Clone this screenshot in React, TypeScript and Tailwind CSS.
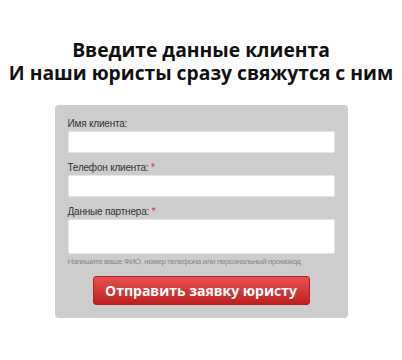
export default function App() {
  return (
    <main className="h-[360px] w-[402px] bg-white pt-[38px]">
      <h1 className="text-center font-['Open_Sans',sans-serif] text-[19.3px] font-bold leading-[23px] text-[#111]">
        Введите данные клиента
        <br />
        И наши юристы сразу свяжутся с ним
      </h1>

      <form className="mx-auto mt-[21px] w-[293px] rounded-[4px] bg-[#cdcdcd] px-[13px] pb-[13px] pt-[12px] font-['Liberation_Sans',Arial,sans-serif]">
        <label className="block text-[10px] leading-[14px] tracking-[-0.2px] text-[#333]">Имя клиента:</label>
        <input
          type="text"
          className="block h-[22px] w-full rounded-[2px] border border-[#e6e6e6] bg-white"
        />

        <label className="mt-[8px] block text-[10px] leading-[14px] tracking-[-0.2px] text-[#333]">
          Телефон клиента: <span className="text-[#e02b2b]">*</span>
        </label>
        <input
          type="text"
          className="block h-[22px] w-full rounded-[2px] border border-[#e6e6e6] bg-white"
        />

        <label className="mt-[8px] block text-[10px] leading-[14px] tracking-[-0.2px] text-[#333]">
          Данные партнера: <span className="text-[#e02b2b]">*</span>
        </label>
        <textarea className="block h-[35px] w-full resize-none rounded-[2px] border border-[#e6e6e6] bg-white" />
        <p className="mt-[2px] whitespace-nowrap text-[8px] leading-[11px] tracking-[-0.4px] text-[#888]">
          Напишите ваше ФИО, номер телефона или персональный промокод
        </p>

        <div className="mt-[9px] flex justify-center">
          <button
            type="button"
            className="h-[29px] w-[217px] rounded-[3px] border border-[#b51c1c] bg-gradient-to-b from-[#e65050] to-[#c01d1d] font-['Open_Sans',sans-serif] text-[14px] font-bold text-white"
          >
            Отправить заявку юристу
          </button>
        </div>
      </form>
    </main>
  );
}
